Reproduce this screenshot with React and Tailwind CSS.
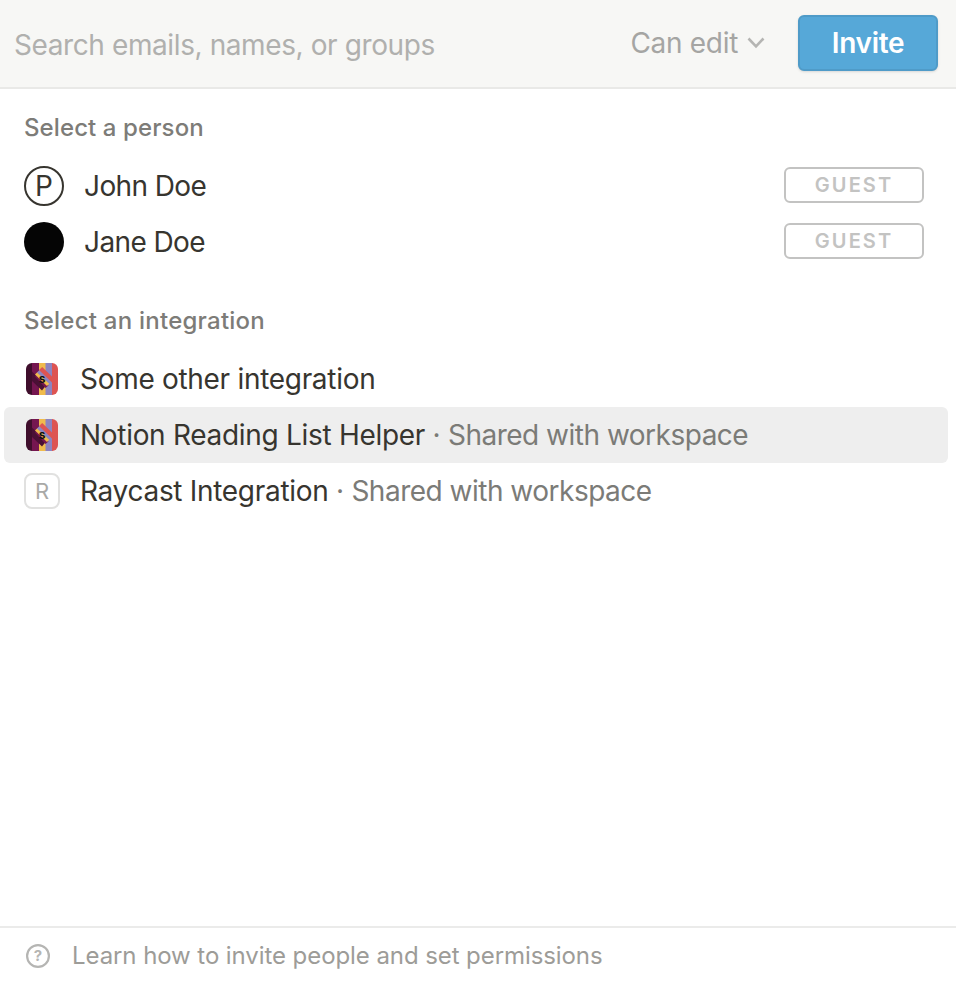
import React from "react";

function StripedIcon() {
  return (
    <svg viewBox="0 0 32 32" className="size-8 shrink-0 rounded-md">
      <rect width="6.5" height="32" fill="#3f0e2c" />
      <rect x="6" width="7.500" height="32" fill="#751650" />
      <rect x="13" width="7" height="32" fill="#f0bb4c" />
      <rect x="19.5" width="7" height="32" fill="#8d84c0" />
      <rect x="26" width="6" height="32" fill="#dd5452" />
      <path d="M6 8.500 L20 22.500 L16 27.500 L6 18Z" fill="#4a1035" />
      <path d="M9 13.500 L11 11.500 L22.500 22.500 L19.500 25Z" fill="#751650" />
      <path d="M9 11.500 L11.500 9 L23.500 20.500 L21 23Z" fill="#f0bb4c" />
      <path d="M11 9.500 L14 6.500 L26 18.500 L23.500 21Z" fill="#8d84c0" />
      <path d="M13 7 L16.200 4 L26.500 14 L26.500 20Z" fill="#dd5452" />
      <text x="16" y="20" textAnchor="middle" fontSize="12" fontWeight="700" fontFamily="Inter, sans-serif" fill="#111">s</text>
    </svg>
  );
}

function Person({ name, avatar }) {
  return (
    <div className="flex h-14 items-center pl-6 pr-8">
      {avatar}
      <span className="ml-5 text-[28px] leading-9 tracking-[-0.6px]">{name}</span>
      <span className="mb-0.5 ml-auto flex h-9 w-[140px] items-center justify-center rounded-md border-2 border-[#c3c3c2] text-xl font-semibold tracking-[2.1px] text-[#c3c3c2]">
        GUEST
      </span>
    </div>
  );
}

function Integration({ name, icon, shared, active }) {
  return (
    <div className={`ml-1 mr-2 flex h-14 items-center rounded-md pl-5 ${active ? "bg-[#eeeeee]" : ""}`}>
      <span className="flex w-9 shrink-0 justify-center">{icon}</span>
      <span className="ml-5 whitespace-pre text-[28px] leading-9 tracking-[-0.3px]">
        {name}
        {shared && (
          <span className="text-[#7b7b77]">
            {" · "}
            <span className="tracking-[-0.5px]">Shared with workspace</span>
          </span>
        )}
      </span>
    </div>
  );
}

export default function App() {
  return (
    <div className="flex h-[982px] w-[956px] flex-col overflow-hidden bg-white font-['Inter',sans-serif] text-[#37352f]">
      <header className="flex h-[89px] shrink-0 items-center border-b-2 border-[#e9e9e7] bg-[#f7f7f5] pb-px pl-3.5 pr-[18px]">
        <span className="mt-1 text-[28px] leading-9 tracking-[-0.4px] text-[#b0b0ae]">
          Search emails, names, or groups
        </span>
        <span className="ml-auto text-[28px] leading-9 tracking-[-0.3px] text-[#a5a5a3]">Can edit</span>
        <svg viewBox="0 0 18 12" className="ml-[9px] mr-px h-3 w-[18px]" fill="none" stroke="#b5b5b3" strokeWidth="2.600">
          <path d="M1.500 1.500 L9 9.300 L16.500 1.500" />
        </svg>
        <button className="ml-8 h-14 w-[140px] rounded-md border-2 border-[#4f9bc8] bg-[#56a8d8] text-[28px] font-semibold leading-9 tracking-[-0.3px] text-white shadow-sm">
          Invite
        </button>
      </header>
      <main className="flex-1">
        <h2 className="mt-[23px] pl-6 text-2xl font-medium tracking-[0.1px] text-[#7d7c78]">Select a person</h2>
        <div className="mt-[14px]">
          <Person
            name="John Doe"
            avatar={
              <span className="flex size-10 items-center justify-center rounded-full border-2 border-[#37352f] text-[28px] leading-none">
                P
              </span>
            }
          />
          <Person name="Jane Doe" avatar={<span className="size-10 rounded-full bg-[#050505]" />} />
        </div>
        <h2 className="mt-[35px] pl-6 text-2xl font-medium tracking-[0.24px] text-[#7d7c78]">Select an integration</h2>
        <div className="mt-[14px]">
          <Integration name="Some other integration" icon={<StripedIcon />} />
          <Integration name="Notion Reading List Helper" icon={<StripedIcon />} shared active />
          <Integration
            name="Raycast Integration"
            shared
            icon={
              <span className="flex size-9 items-center justify-center rounded-lg border-2 border-[#e1e1e0] bg-white text-[22px] leading-none text-[#a9a9a7]">
                R
              </span>
            }
          />
        </div>
      </main>
      <footer className="flex h-14 shrink-0 items-center border-t-2 border-[#ebebea] pl-[26px] pt-0.5">
        <svg viewBox="0 0 24 24" className="size-6" fill="none" stroke="#b5b5b3" strokeWidth="2.200">
          <circle cx="12" cy="12" r="10.900" />
          <text x="12" y="17.200" textAnchor="middle" fontSize="15" fontWeight="700" fontFamily="Inter, sans-serif" fill="#b5b5b3" stroke="none">?</text>
        </svg>
        <span className="ml-[22px] text-2xl tracking-[-0.08px] text-[#9d9c98]">
          Learn how to invite people and set permissions
        </span>
      </footer>
    </div>
  );
}
